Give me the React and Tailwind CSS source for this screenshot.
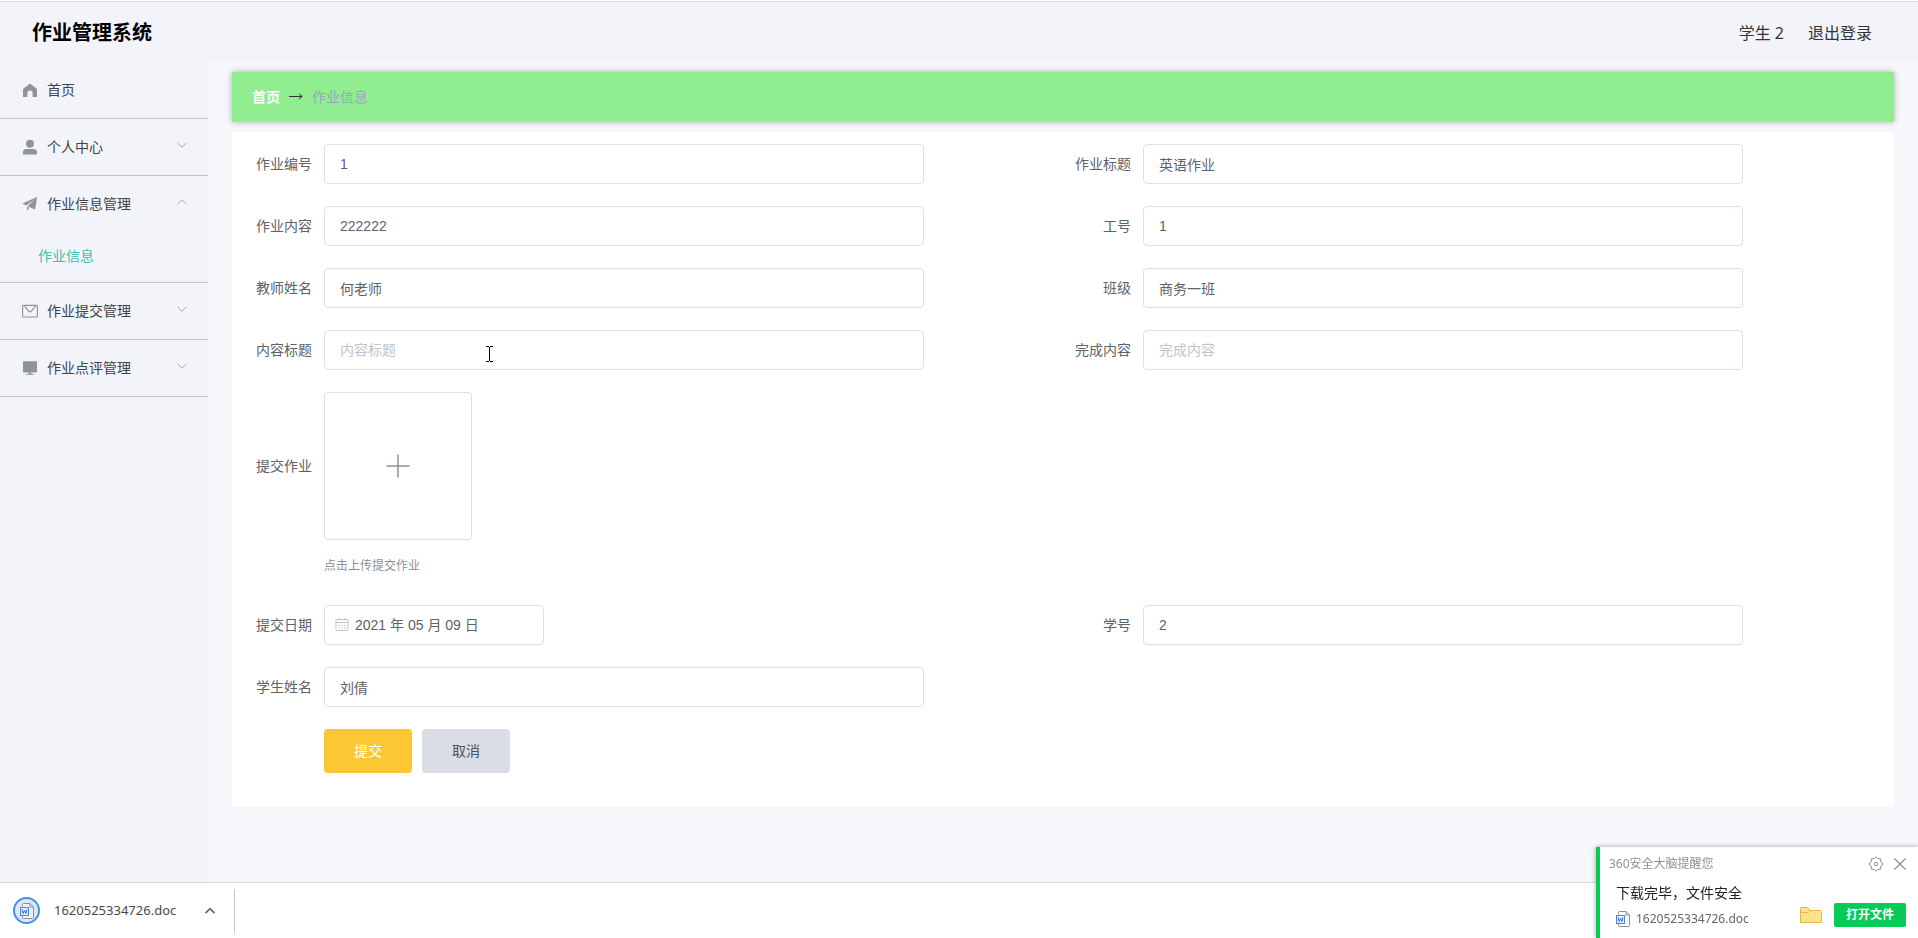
import { useState } from "react";

function HomeIcon() {
  return (
    <svg className="w-4 h-4 fill-[#909399]" viewBox="0 0 16 16">
      <path d="M8 1.6 1 7v8h4.4v-4a2.6 2.6 0 0 1 5.2 0v4H15V7z" />
    </svg>
  );
}

function UserIcon() {
  return (
    <svg className="w-4 h-4 fill-[#909399]" viewBox="0 0 16 16">
      <circle cx="8" cy="4.8" r="4" />
      <path d="M1 15.4v-2.6c0-1.600 1.400-2.800 3.200-2.800h7.600c1.800 0 3.200 1.200 3.200 2.800v2.600z" />
    </svg>
  );
}

function SendIcon() {
  return (
    <svg className="w-4 h-4 fill-[#909399]" viewBox="0 0 16 16">
      <path d="M15.2 1 .4 7.4l4 2.2L13 3 5.6 10.2 13 13.6z" />
      <path d="M5 10.8v4l2.2-3z" />
    </svg>
  );
}

function MailIcon() {
  return (
    <svg
      className="w-4 h-4 fill-none stroke-[#909399]"
      viewBox="0 0 16 16"
      strokeWidth="1.1"
    >
      <rect x="0.6" y="2.4" width="14.8" height="11.6" rx="1" />
      <path d="m2.600 3.200 4 5a1.800 1.800 0 0 0 2.800 0l4-5" />
    </svg>
  );
}

function MonitorIcon() {
  return (
    <svg className="w-4 h-4 fill-[#909399]" viewBox="0 0 16 16">
      <rect x="1" y="1.2" width="14" height="11.200" rx="0.6" />
      <path d="M7 12h2v1.4l3.4.8v.6H3.6v-.6L7 13.4z" />
    </svg>
  );
}

function Chevron({ open }) {
  return (
    <svg
      className="w-3 h-3 mb-1 fill-none stroke-[#a3a6ad]"
      viewBox="0 0 12 12"
      strokeWidth="1"
    >
      <path d={open ? "M1.5 8.2 6 3.8l4.5 4.4" : "M1.5 3.8 6 8.2l4.5-4.4"} />
    </svg>
  );
}

function CalendarIcon() {
  return (
    <svg
      className="w-[14px] h-[14px] shrink-0 fill-none stroke-[#c0c4cc]"
      viewBox="0 0 14 14"
    >
      <rect x="1" y="1.500" width="12" height="11" rx="0.5" />
      <path d="M1 4.500h12M4 0v2.6M10 0v2.6M3.500 7.500h1.500M6.250 7.500h1.500M9 7.500h1.500M3.500 10h1.500M6.250 10h1.500M9 10h1.500" />
    </svg>
  );
}

function DocIcon({ className }) {
  return (
    <svg className={className} viewBox="0 0 14 16" fill="none">
      <path
        d="M2.5 3.5v-2A1 1 0 0 1 3.500.5H10L13.500 4v10.500a1 1 0 0 1-1 1h-9a1 1 0 0 1-1-1V13"
        fill="#fff"
        fillOpacity="0.4"
        stroke="#8d9097"
      />
      <path d="M10 .5V4h3.500" stroke="#8d9097" />
      <rect x="0.5" y="4.500" width="8" height="8" fill="#e4eefb" stroke="#4d86d8" />
      <path d="m2.200 6.500.9 4 1.400-3 1.400 3 .9-4" stroke="#2f6fd0" />
    </svg>
  );
}

function GearIcon() {
  return (
    <svg
      className="w-4 h-4 fill-none stroke-[#8c8c8c]"
      viewBox="0 0 16 16"
      strokeLinejoin="round"
    >
      <path d="M6.200 2.600 8 .8l1.800 1.800h2.600v2.400L15 8l-2.600 3v2.400H9.800L8 15.200l-1.800-1.800H3.600V11L1 8l2.600-3V2.600z" />
      <circle cx="8" cy="8" r="1.700" />
    </svg>
  );
}

const menus = [
  { title: "首页", icon: HomeIcon },
  { title: "个人中心", icon: UserIcon, children: [] },
  { title: "作业信息管理", icon: SendIcon, children: ["作业信息"] },
  { title: "作业提交管理", icon: MailIcon, children: [] },
  { title: "作业点评管理", icon: MonitorIcon, children: [] },
];

function Sidebar() {
  const [opened, setOpened] = useState("作业信息管理");

  return (
    <nav className="w-[208px] shrink-0 bg-[#f3f4fa]">
      <ul>
        {menus.map(({ title, icon: Icon, children }) => (
          <li key={title} className="border-b border-[#c3c5cc]">
            <button
              type="button"
              onClick={() => setOpened(opened === title ? "" : title)}
              className="flex items-center w-full h-14 pl-[22px] pr-5 text-sm text-[#404349]"
            >
              <Icon />
              <span className="ml-[9px] flex-1 text-left">{title}</span>
              {children && <Chevron open={opened === title} />}
            </button>
            {opened === title &&
              children?.map((child) => (
                <a
                  key={child}
                  href="#"
                  className="flex items-center h-[50px] pl-[38px] pb-[2px] text-sm text-[#3fbfae]"
                >
                  {child}
                </a>
              ))}
          </li>
        ))}
      </ul>
    </nav>
  );
}

function Field({ id, label, value, placeholder }) {
  return (
    <div className="flex items-center">
      <label htmlFor={id} className="w-20 pr-3 text-right">
        {label}
      </label>
      <input
        id={id}
        type="text"
        defaultValue={value}
        placeholder={placeholder}
        className="w-[600px] h-10 px-[15px] rounded border border-[#dcdfe6] bg-white font-['Liberation_Sans','Noto_Sans_CJK_SC',sans-serif] placeholder:text-[#c0c4cc] outline-none"
      />
    </div>
  );
}

function HomeworkForm() {
  return (
    <form
      onSubmit={(e) => e.preventDefault()}
      className="mt-[10px] px-3 pt-3 pb-[34px] bg-white text-sm text-[#606266]"
    >
      <div className="grid grid-cols-2 gap-y-[22px]">
        <Field id="bianhao" label="作业编号" value="1" />
        <Field id="biaoti" label="作业标题" value="英语作业" />
        <Field id="neirong" label="作业内容" value="222222" />
        <Field id="gonghao" label="工号" value="1" />
        <Field id="jiaoshi" label="教师姓名" value="何老师" />
        <Field id="banji" label="班级" value="商务一班" />
        <Field id="nrbiaoti" label="内容标题" placeholder="内容标题" />
        <Field id="wancheng" label="完成内容" placeholder="完成内容" />

        {/* Upload */}
        <div className="col-span-2">
          <div className="flex items-center">
            <label htmlFor="zuoye" className="w-20 pr-3 text-right">
              提交作业
            </label>
            <label className="flex items-center justify-center w-[148px] h-[148px] rounded border border-[#dcdfe6] cursor-pointer">
              <input id="zuoye" type="file" className="sr-only" />
              <svg
                className="w-6 h-6 stroke-[#8c939d]"
                viewBox="0 0 24 24"
                strokeWidth="1.500"
              >
                <path d="M12 .5v23M.5 12h23" />
              </svg>
            </label>
          </div>
          <p className="ml-20 mt-4 mb-[7px] text-xs leading-5 text-[#8a8f99]">
            点击上传提交作业
          </p>
        </div>

        {/* Date and student */}
        <div className="flex items-center">
          <label htmlFor="riqi" className="w-20 pr-3 text-right">
            提交日期
          </label>
          <div className="flex items-center gap-[6px] w-[220px] h-10 px-[10px] rounded border border-[#dcdfe6]">
            <CalendarIcon />
            <input
              id="riqi"
              type="text"
              defaultValue="2021 年 05 月 09 日"
              className="w-full font-['Liberation_Sans','Noto_Sans_CJK_SC',sans-serif] outline-none"
            />
          </div>
        </div>
        <Field id="xuehao" label="学号" value="2" />
        <Field id="xingming" label="学生姓名" value="刘倩" />
      </div>

      <div className="flex gap-[10px] mt-[22px] ml-20">
        <button
          type="submit"
          className="w-[88px] h-11 rounded bg-[#fbc732] text-white"
        >
          提交
        </button>
        <button
          type="button"
          className="w-[88px] h-11 rounded bg-[#dadde5] text-[#505255]"
        >
          取消
        </button>
      </div>
    </form>
  );
}

function DownloadBar() {
  return (
    <footer className="flex items-center h-14 shrink-0 pl-[13px] bg-white border-t border-[#d8dade]">
      <span className="flex items-center justify-center w-[27px] h-[27px] rounded-full border-2 border-[#4a90e2] bg-[#dce8f8]">
        <DocIcon className="w-[14px] h-4" />
      </span>
      <span className="ml-[14px] text-[13px] text-[#4a4a4a]">
        1620525334726.doc
      </span>
      <button type="button" aria-label="更多" className="ml-7">
        <svg
          className="w-3 h-3 fill-none stroke-[#6b6b6b]"
          viewBox="0 0 12 12"
          strokeWidth="1.800"
        >
          <path d="m1.500 8.200 4.500-4.500 4.500 4.500" />
        </svg>
      </button>
      <span className="ml-[18px] w-px h-11 bg-[#c8c8c8]" />
    </footer>
  );
}

function SafeToast() {
  return (
    <aside className="fixed right-0 bottom-0 w-[322px] h-[91px] pl-[9px] pr-3 bg-white border-l-4 border-[#06cb56] shadow-[0_0_5px_rgba(0,0,0,0.35)]">
      <div className="flex items-center h-[34px]">
        <span className="flex-1 text-xs text-[#909090]">
          360安全大脑提醒您
        </span>
        <button type="button" aria-label="设置">
          <GearIcon />
        </button>
        <button type="button" aria-label="关闭" className="ml-[10px]">
          <svg
            className="w-3 h-3 stroke-[#8c8c8c]"
            viewBox="0 0 12 12"
            strokeWidth="1.200"
          >
            <path d="m.5.5 11 11M11.500.5l-11 11" />
          </svg>
        </button>
      </div>
      <div className="flex items-end justify-between pl-[7px]">
        <div className="flex flex-col gap-[2px]">
          <p className="text-sm leading-6 text-[#222]">下载完毕，文件安全</p>
          <p className="flex items-center gap-[6px] text-xs leading-6 text-[#666]">
            <DocIcon className="w-[14px] h-4" />
            1620525334726.doc
          </p>
        </div>
        <div className="flex items-center gap-3 mb-1">
          <button type="button" aria-label="打开文件夹">
            <svg className="w-[22px] h-[18px]" viewBox="0 0 22 18">
              <path
                d="M.5 16.500v-14a1 1 0 0 1 1-1h6l2.500 3h10.500a1 1 0 0 1 1 1v11z"
                fill="#fde28a"
                stroke="#e3b945"
              />
              <path d="M10 4.500 8.500 6.500H1" fill="none" stroke="#e3b945" />
            </svg>
          </button>
          <button
            type="button"
            className="w-[72px] h-6 rounded-xs bg-[#06cb56] text-xs font-bold text-white"
          >
            打开文件
          </button>
        </div>
      </div>
    </aside>
  );
}

export default function App() {
  return (
    <div className="flex flex-col min-h-screen bg-[#f5f7fb] font-['Noto_Sans','Noto_Sans_CJK_SC',sans-serif]">
      <div className="h-[2px] bg-white border-b border-[#d8dade]" />
      <header className="flex items-center justify-between h-[60px] pt-[2px] pl-8 pr-[46px] bg-[#f3f4fa]">
        <h1 className="text-xl font-bold text-black">作业管理系统</h1>
        <div className="flex gap-6 text-base text-[#333]">
          <span>学生 2</span>
          <a href="#">退出登录</a>
        </div>
      </header>

      <div className="flex flex-1">
        <Sidebar />
        <main className="flex-1 px-6 pt-[10px]">
          <div className="flex items-center gap-[9px] h-[50px] px-5 text-sm bg-[#90ee90] shadow-[0_0_6px_rgba(0,0,0,0.3)]">
            <a href="#" className="font-bold text-white">
              首页
            </a>
            <svg
              className="w-[14px] h-3 fill-none stroke-[#303133]"
              viewBox="0 0 14 12"
            >
              <path d="M0 5.500h13M10 3l3.200 2.500L10 8" />
            </svg>
            <span className="text-[#97a8be]">作业信息</span>
          </div>
          <HomeworkForm />
        </main>
      </div>

      <DownloadBar />
      <SafeToast />

      {/* Text cursor over the field */}
      <svg
        className="absolute left-[485px] top-[345px] w-[10px] h-[18px] fill-none stroke-black"
        viewBox="0 0 10 18"
      >
        <path d="M1 1.500h3M5 1.500h3M4.500 2v14M1 16.500h3M5 16.500h3" />
      </svg>
    </div>
  );
}
